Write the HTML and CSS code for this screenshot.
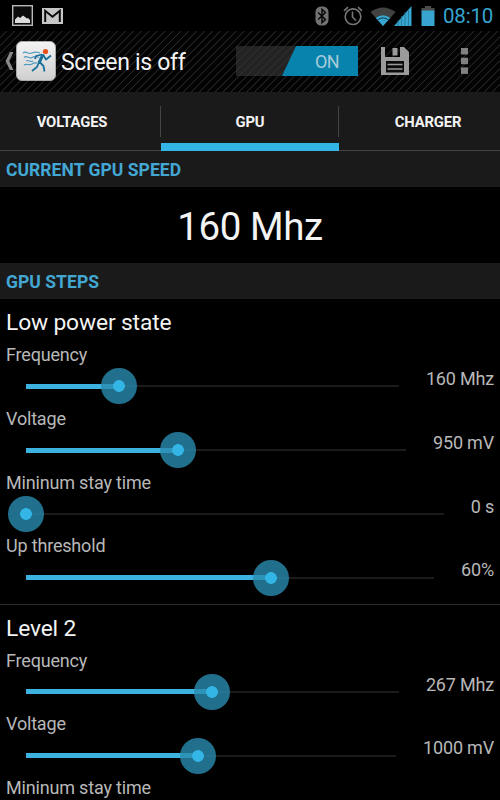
FILE: index.html
```
<!DOCTYPE html>
<html lang="en">
<head>
    <meta charset="UTF-8">
    <title>Screen is off</title>
    <link rel="stylesheet" href="styles.css">
</head>
<body>
    <div class="status-bar">
        <svg class="status-picture" width="21" height="21" viewBox="0 0 21 21">
            <rect x="0.7" y="0.7" width="19.6" height="19.6" fill="#0b0b0b" stroke="#b9b9b9" stroke-width="1.4"/>
            <path d="M3 18v-3.500l3-3 2 1.500 3-2.500 4 3 1-0.500 2 2v3z" fill="#dcdcdc"/>
        </svg>
        <svg class="status-mail" width="21" height="16" viewBox="0 0 21 16">
            <rect x="0" y="0" width="21" height="16" fill="#c6c6c6"/>
            <path d="M3.200 14V2.800l7.300 6 7.300-6V14" fill="none" stroke="#0a0a0a" stroke-width="2"/>
        </svg>
        <div class="status-right">
            <svg width="14" height="20" viewBox="0 0 14 20">
                <rect x="0.5" y="0.5" width="13" height="19" rx="5.5" fill="#727272"/>
                <path d="M3.200 6.500l7.200 7L7 16.600V3.400l3.400 3.100-7.200 7" fill="none" stroke="#050505" stroke-width="1.4"/>
            </svg>
            <svg class="status-alarm" width="20" height="20" viewBox="0 0 20 20" fill="none" stroke="#777" stroke-width="1.6">
                <circle cx="10" cy="10.7" r="7.8"/>
                <path d="M9.500 5.500v5.500l3.500 3.500M1 4.800L5 1.200M19 4.800L15 1.200"/>
            </svg>
            <svg class="status-wifi" width="26" height="20" viewBox="0 0 26 20">
                <path d="M0.500 6Q13-3 25.500 6L13 20z" fill="#424242"/>
                <path d="M5.700 12Q13 6.500 20.300 12L13 20z" fill="#36a5d0"/>
                <path d="M7 14.300Q13 9.500 19 14.300" fill="none" stroke="#123c4c" stroke-width="1"/>
            </svg>
            <svg class="status-signal" width="18" height="20" viewBox="0 0 18 20">
                <path d="M0 20L17.500 0v20z" fill="#36a5d0"/>
                <path d="M4 14v6M7.500 10v10M11 6v14M14.500 3v17" stroke="#1d6c8b" stroke-width="0.7"/>
            </svg>
            <svg class="status-battery" width="14" height="20" viewBox="0 0 14 20">
                <path d="M4 0h6v2h3.500v3H0.500V2H4z" fill="#4a4a4a"/>
                <rect x="0.5" y="4.5" width="13" height="15.5" fill="#36a5d0"/>
            </svg>
            <span class="clock">08:10</span>
        </div>
    </div>

    <div class="action-bar">
        <svg class="back" width="9" height="20" viewBox="0 0 9 20">
            <path d="M5 1h3.500L4.200 10l4.300 9H5L0.500 10z" fill="#8a8a8a"/>
        </svg>
        <svg class="app-icon" width="40" height="40" viewBox="0 0 40 40">
            <defs>
                <linearGradient id="iconBg" x1="0" y1="0" x2="0" y2="1">
                    <stop offset="0" stop-color="#f4f4f4"/>
                    <stop offset="1" stop-color="#cfcfcf"/>
                </linearGradient>
            </defs>
            <rect x="0.5" y="0.5" width="39" height="39" rx="5.5" fill="url(#iconBg)" stroke="#a9a9a9"/>
            <g fill="none" stroke="#4f9ac0" stroke-width="1.2">
                <path d="M7 12c3-3 5 2 9 0s5-1 8 0"/>
                <path d="M8 16.500c3-3 5 2 8 0s4-1 7 0"/>
                <path d="M10 20c3-2 4 2 7 0"/>
                <path d="M8 24c3-2 5 1 8-1s3-1 5-1"/>
            </g>
            <g fill="none" stroke="#19709a" stroke-width="1.8" stroke-linejoin="round">
                <path d="M27 13.500L23 22" stroke-width="3"/>
                <path d="M23 21l-2 5-5 4M23.500 21l4 4 1 5.500M27 13.500l3 5 5-4M26 13.500l-6 1.500-1 3"/>
            </g>
            <circle cx="29.5" cy="10.5" r="2.6" fill="#e8521c"/>
        </svg>
        <h1>Screen is off</h1>
        <div class="switch"><span class="switch-thumb">ON</span></div>
        <svg class="save" width="28" height="28" viewBox="0 0 28 28">
            <path d="M0 0h4v10h15V0h4l5 5v23H0z" fill="#9b9b9b"/>
            <rect x="11.5" y="1" width="5" height="7.5" fill="#9b9b9b"/>
            <path d="M5 14h18v11.500H5z" fill="#0b0b0b"/>
            <path d="M6.500 17.500h15M6.500 22h15" stroke="#9b9b9b" stroke-width="1.6"/>
        </svg>
        <svg class="overflow" width="7" height="26" viewBox="0 0 7 26" fill="#808080">
            <rect y="0" width="7" height="6.5"/>
            <rect y="9.7" width="7" height="6.5"/>
            <rect y="19.4" width="7" height="6.5"/>
        </svg>
    </div>

    <div class="tabs">
        <div class="tab">VOLTAGES</div>
        <div class="tab active">GPU</div>
        <div class="tab">CHARGER</div>
    </div>

    <h2 class="section-header">CURRENT GPU SPEED</h2>
    <div class="current-speed">160 Mhz</div>
    <h2 class="section-header">GPU STEPS</h2>

    <div class="step">
        <h3>Low power state</h3>
        <div class="setting">
            <div class="label">Frequency</div>
            <div class="control">
                <div class="slider" style="--value: 25%"><span class="fill"></span><span class="thumb"></span></div>
                <span class="value">160 Mhz</span>
            </div>
        </div>
        <div class="setting">
            <div class="label">Voltage</div>
            <div class="control">
                <div class="slider" style="--value: 40%"><span class="fill"></span><span class="thumb"></span></div>
                <span class="value">950 mV</span>
            </div>
        </div>
        <div class="setting">
            <div class="label">Mininum stay time</div>
            <div class="control">
                <div class="slider" style="--value: 0%"><span class="fill"></span><span class="thumb"></span></div>
                <span class="value">0 s</span>
            </div>
        </div>
        <div class="setting">
            <div class="label">Up threshold</div>
            <div class="control">
                <div class="slider" style="--value: 60%"><span class="fill"></span><span class="thumb"></span></div>
                <span class="value">60%</span>
            </div>
        </div>
    </div>

    <div class="step last">
        <h3>Level 2</h3>
        <div class="setting">
            <div class="label">Frequency</div>
            <div class="control">
                <div class="slider" style="--value: 50%"><span class="fill"></span><span class="thumb"></span></div>
                <span class="value">267 Mhz</span>
            </div>
        </div>
        <div class="setting">
            <div class="label">Voltage</div>
            <div class="control">
                <div class="slider" style="--value: 46.6%"><span class="fill"></span><span class="thumb"></span></div>
                <span class="value">1000 mV</span>
            </div>
        </div>
        <div class="label">Mininum stay time</div>
    </div>
</body>
</html>
```
FILE: styles.css
```
* {
    box-sizing: border-box;
}

body {
    margin: 0;
    height: 800px;
    overflow: hidden;
    background-color: #000;
    color: #f3f3f3;
    font-family: Roboto, sans-serif;
}

h1, h2, h3 {
    margin: 0;
    font-weight: normal;
}

svg {
    display: block;
    flex-shrink: 0;
}

/* status bar */
.status-bar {
    display: flex;
    align-items: center;
    height: 31px;
    padding: 0 7px 0 12px;
}

.status-mail {
    margin-left: 9px;
}

.status-right {
    display: flex;
    align-items: center;
    margin-left: auto;
}

.status-alarm {
    margin-left: 14px;
}

.status-wifi {
    margin-left: 7px;
}

.status-signal {
    margin-left: -2px;
}

.status-battery {
    margin-left: 9px;
}

.clock {
    width: 50px;
    margin-left: 8px;
    color: #36a5d0;
    font-size: 20.5px;
    letter-spacing: -0.2px;
    white-space: nowrap;
}

/* action bar */
.action-bar {
    display: flex;
    align-items: center;
    height: 61px;
    padding: 0 32px 1px 5px;
    background: repeating-linear-gradient(135deg, #030303 0, #030303 4px, #2b2d2b 4.8px, #030303 5.6px);
}

.app-icon {
    margin-left: 2px;
}

.action-bar h1 {
    margin-left: 5px;
    padding-top: 2px;
    font-size: 23px;
    letter-spacing: -0.3px;
    white-space: nowrap;
}

.switch {
    display: flex;
    justify-content: flex-end;
    width: 122px;
    height: 30px;
    margin-left: auto;
    background-color: rgba(52, 52, 52, 0.65);
}

.switch-thumb {
    width: 76px;
    padding-left: 33px;
    background-color: #0783ae;
    color: #a9ccd9;
    font-size: 18px;
    letter-spacing: -0.6px;
    line-height: 32px;
    clip-path: polygon(14px 0, 100% 0, 100% 100%, 0 100%);
}

.save {
    margin-left: 23px;
}

.overflow {
    margin-left: 52px;
}

/* tabs */
.tabs {
    display: flex;
    justify-content: center;
    height: 59px;
    overflow: hidden;
    background: linear-gradient(90deg, #444, #444) bottom / 100% 1px no-repeat #1a1a1a;
}

.tab {
    position: relative;
    flex: 0 0 178px;
    font-size: 14.8px;
    font-weight: bold;
    letter-spacing: -0.15px;
    line-height: 60px;
    text-align: center;
}

.tab + .tab::before {
    content: "";
    position: absolute;
    left: -1px;
    top: 14px;
    width: 1px;
    height: 31px;
    background-color: #444;
}

.tab.active {
    border-bottom: 8px solid #33b5e5;
}

.section-header {
    height: 36px;
    padding-left: 6px;
    background-color: #1a1a1a;
    color: #43a7d3;
    font-size: 17.5px;
    font-weight: bold;
    letter-spacing: 0.05px;
    line-height: 39px;
}

.current-speed {
    height: 76px;
    font-size: 38.5px;
    letter-spacing: -0.4px;
    line-height: 80px;
    text-align: center;
}

/* gpu steps */
.step {
    height: 305.5px;
    padding: 0 6px;
    border-bottom: 1.5px solid #2b2b2b;
}

.step.last {
    height: 196px;
    border-bottom: none;
}

.step h3 {
    height: 44px;
    font-size: 22.8px;
    letter-spacing: -0.15px;
    line-height: 47px;
}

.setting {
    height: 63.8px;
}

.label, .value {
    color: #b8b8b8;
    font-size: 18px;
    letter-spacing: -0.18px;
    line-height: 24px;
}

.label {
    height: 24px;
}

.control {
    display: flex;
    gap: 27px;
    height: 38px;
    margin-left: 20px;
}

.slider {
    position: relative;
    flex: 1;
    height: 2px;
    margin-top: 18.4px;
    background-color: #1b1b1b;
}

.fill {
    position: absolute;
    left: 0;
    top: -1.5px;
    width: var(--value);
    height: 5px;
    background-color: #3bb2e0;
}

.thumb {
    position: absolute;
    left: var(--value);
    top: 1px;
    width: 36px;
    height: 36px;
    border-radius: 50%;
    background: radial-gradient(circle, #33b5e5 5.5px, rgba(41, 139, 175, 0.8) 6.2px);
    transform: translate(-50%, -50%);
}
```
